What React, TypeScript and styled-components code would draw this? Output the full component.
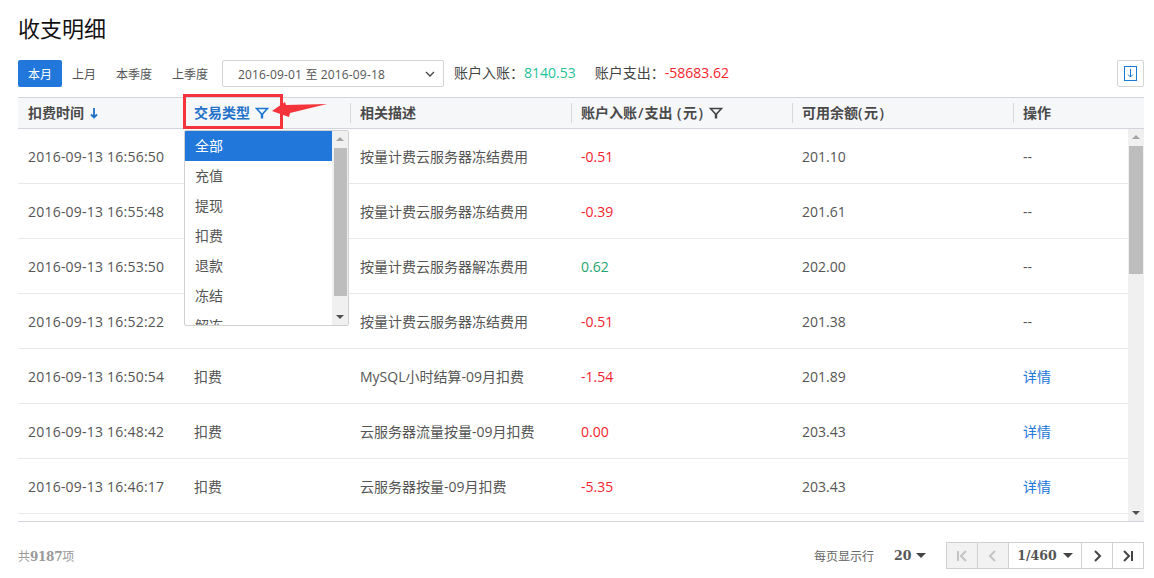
import React from 'react';
import styled, { createGlobalStyle } from 'styled-components';

const Global = createGlobalStyle`
  html, body { margin: 0; padding: 0; background: #fff; }
  body { font-family: "Open Sans", "Noto Sans CJK SC", sans-serif; font-size: 14px; color: #555; }
  * { box-sizing: border-box; }
`;

const Page = styled.div`
  position: relative;
  width: 1154px;
  height: 578px;
  overflow: hidden;
  padding: 13px 10px 0 18px;
`;
const Title = styled.h1`
  margin: 0;
  height: 30px;
  font-size: 22px;
  line-height: 30px;
  font-weight: 400;
  color: #111;
`;
const Toolbar = styled.div`
  display: flex;
  align-items: center;
  height: 27px;
  margin-top: 17px;
`;
const Period = styled.button<{ $active?: boolean; $w?: number }>`
  width: ${p => p.$w || 44}px;
  height: 27px;
  padding: 0;
  border: 0;
  border-radius: 2px;
  font: inherit;
  font-size: 12px;
  background: ${p => (p.$active ? '#2277da' : 'transparent')};
  color: ${p => (p.$active ? '#fff' : '#555')};
`;
const DateSelect = styled.div`
  display: flex;
  align-items: center;
  justify-content: space-between;
  width: 222px;
  height: 27px;
  margin-left: 4px;
  padding: 0 8px 0 15px;
  border: 1px solid #d5d5d5;
  border-radius: 2px;
  font-size: 12px;
  letter-spacing: 0.15px;
  color: #555;
`;
const Stat = styled.span<{ $ml: number }>`
  margin-left: ${p => p.$ml}px;
  margin-bottom: 3px;
  font-size: 14px;
  color: #444;
`;
const Amount = styled.span<{ $c: string }>`
  color: ${p => p.$c};
`;
const Spacer = styled.div`
  flex: 1;
`;
const Export = styled.button`
  display: flex;
  align-items: center;
  justify-content: center;
  width: 27px;
  height: 27px;
  padding: 0;
  border: 1px solid #d5d5d5;
  border-radius: 2px;
  background: #fff;
`;
const Head = styled.div`
  display: grid;
  grid-template-columns: 166px 166px 221px 221px 221px 1fr;
  align-items: center;
  height: 32px;
  margin-top: 10px;
  background: #f6f7f9;
  border-top: 1px solid #d3d4de;
  border-bottom: 1px solid #d3d4de;
`;
const HeadCell = styled.div<{ $active?: boolean; $first?: boolean }>`
  display: flex;
  align-items: center;
  gap: 5px;
  height: 20px;
  padding-left: ${p => (p.$first ? 10 : 9)}px;
  border-left: ${p => (p.$first ? '0' : '1px solid #d8d8dc')};
  font-size: 14px;
  line-height: 18px;
  font-weight: 600;
  white-space: pre;
  color: ${p => (p.$active ? '#2272c9' : '#4a4a4a')};
`;
const HeadLabel = styled.span`
  word-spacing: 1px;
`;
const Unit = styled.span`
  letter-spacing: 1.5px;
`;
const Slash = styled.span`
  margin: 0 1px;
`;
const Body = styled.div`
  display: flex;
  height: 393px;
  overflow: hidden;
  border-bottom: 1px solid #d3d4de;
`;
const Rows = styled.div`
  flex: 1;
  min-width: 0;
`;
const Row = styled.div`
  display: grid;
  grid-template-columns: 166px 166px 221px 221px 221px 1fr;
  align-items: center;
  height: 55px;
  border-bottom: 1px solid #e8e8ea;
`;
const Cell = styled.div<{ $c?: string }>`
  padding: 0 0 0 10px;
  font-size: 14px;
  color: ${p => p.$c || '#555'};
  white-space: nowrap;
`;
const TimeCell = styled(Cell)`
  letter-spacing: 0.22px;
`;
const Scrollbar = styled.div`
  display: flex;
  flex-direction: column;
  align-items: center;
  width: 16px;
  background: #f0f0f0;
`;
const ArrowBtn = styled.div<{ $down?: boolean }>`
  width: 0;
  height: 0;
  margin: ${p => (p.$down ? 'auto 0 6px' : '6px 0 0')};
  border-left: 4px solid transparent;
  border-right: 4px solid transparent;
  border-${p => (p.$down ? 'top' : 'bottom')}: 4px solid ${p => (p.$down ? '#505050' : '#a3a3a3')};
`;
const Thumb = styled.div`
  width: 14px;
  height: 128px;
  margin-top: 7px;
  background: #bdbdbd;
`;
const Footer = styled.div`
  display: flex;
  align-items: center;
  height: 27px;
  margin-top: 20px;
`;
const Total = styled.span`
  font-size: 12px;
  color: #999;
`;
const SerifBold = styled.b`
  font-family: "DejaVu Serif", "Noto Sans CJK SC", serif;
  font-size: 12.5px;
  font-weight: 700;
`;
const TotalCount = styled(SerifBold)`
  font-size: 12px;
  letter-spacing: -0.3px;
`;
const PageSizeLabel = styled.span`
  font-size: 12px;
  color: #666;
`;
const PageSize = styled.div`
  display: flex;
  align-items: center;
  gap: 5px;
  width: 72px;
  padding-left: 20px;
  color: #555;
`;
const Caret = styled.i`
  display: block;
  width: 0;
  height: 0;
  border-left: 5px solid transparent;
  border-right: 5px solid transparent;
  border-top: 5px solid #444;
`;
const Pager = styled.div`
  display: flex;
  height: 27px;
  border: 1px solid #d0d0d0;
`;
const PagerBtn = styled.div<{ $off?: boolean; $w?: number }>`
  display: flex;
  align-items: center;
  justify-content: center;
  gap: 6px;
  width: ${p => p.$w || 31}px;
  border-left: 1px solid #d0d0d0;
  background: ${p => (p.$off ? '#f2f2f2' : '#fff')};
  color: #555;
  &:first-child { border-left: 0; width: 30px; }
`;
const RedBox = styled.div`
  position: absolute;
  left: 183px;
  top: 94px;
  width: 100px;
  height: 35px;
  border: 3px solid #f5333a;
`;
const Callout = styled.svg`
  position: absolute;
  left: 270px;
  top: 98px;
`;
const Dropdown = styled.div`
  position: absolute;
  left: 184px;
  top: 130px;
  display: flex;
  width: 165px;
  height: 196px;
  overflow: hidden;
  background: #fff;
  border: 1px solid #d0d0d0;
  border-radius: 2px;
`;
const Options = styled.div`
  flex: 1;
  min-width: 0;
`;
const Option = styled.div<{ $sel?: boolean }>`
  height: 30px;
  padding-left: 10px;
  font-size: 14px;
  line-height: 30px;
  background: ${p => (p.$sel ? '#2277da' : 'transparent')};
  color: ${p => (p.$sel ? '#fff' : '#555')};
`;
const DropThumb = styled(Thumb)`
  width: 13px;
  height: 148px;
  margin-top: 7px;
`;

const rows = [
  ['2016-09-13 16:56:50', '', '按量计费云服务器冻结费用', '-0.51', '#f5222d', '201.10', '--'],
  ['2016-09-13 16:55:48', '', '按量计费云服务器冻结费用', '-0.39', '#f5222d', '201.61', '--'],
  ['2016-09-13 16:53:50', '', '按量计费云服务器解冻费用', '0.62', '#25a56f', '202.00', '--'],
  ['2016-09-13 16:52:22', '', '按量计费云服务器冻结费用', '-0.51', '#f5222d', '201.38', '--'],
  ['2016-09-13 16:50:54', '扣费', 'MySQL小时结算-09月扣费', '-1.54', '#f5222d', '201.89', '详情'],
  ['2016-09-13 16:48:42', '扣费', '云服务器流量按量-09月扣费', '0.00', '#f5222d', '203.43', '详情'],
  ['2016-09-13 16:46:17', '扣费', '云服务器按量-09月扣费', '-5.35', '#f5222d', '203.43', '详情'],
];

const Filter = ({ c }: { c: string }) => (
  <svg width="14" height="14" viewBox="0 0 14 14" fill="none" stroke={c}>
    <path d="M1.5 2.5h11L7 8.5z" strokeWidth="1.6" />
    <path d="M7 8v4.5" strokeWidth="2.4" />
  </svg>
);
const Chevron = ({ d, c = '#444' }: { d: string; c?: string }) => (
  <svg width="14" height="14" viewBox="0 0 14 14" fill="none" stroke={c} strokeWidth="2">
    <path d={d} />
  </svg>
);

export default function App() {
  return (
    <Page>
      <Global />
      <Title>收支明细</Title>
      <Toolbar>
        <Period $active>本月</Period>
        <Period>上月</Period>
        <Period $w={56}>本季度</Period>
        <Period $w={56}>上季度</Period>
        <DateSelect>
          <span>2016-09-01 至 2016-09-18</span>
          <svg width="10" height="6" viewBox="0 0 10 6" fill="none" stroke="#444" strokeWidth="1.3">
            <path d="M1 1l4 4 4-4" />
          </svg>
        </DateSelect>
        <Stat $ml={10}>账户入账：<Amount $c="#1fc29a">8140.53</Amount></Stat>
        <Stat $ml={19}>账户支出：<Amount $c="#f5222d">-58683.62</Amount></Stat>
        <Spacer />
        <Export aria-label="导出">
          <svg width="14" height="15" viewBox="0 0 14 15" fill="none" stroke="#1a7ad4">
            <rect x="0.5" y="0.5" width="12" height="14" />
            <path d="M6.5 3v8M4 8.5l2.5 2.5L9 8.5" />
          </svg>
        </Export>
      </Toolbar>
      <Head>
        <HeadCell $first>
          扣费时间
          <svg width="10" height="12" viewBox="0 0 10 12" fill="none" stroke="#1f6fc4" strokeWidth="1.8">
            <path d="M5 1v9.5M2 7.5l3 3 3-3" />
          </svg>
        </HeadCell>
        <HeadCell $active>
          交易类型
          <Filter c="#1a78d2" />
        </HeadCell>
        <HeadCell>相关描述</HeadCell>
        <HeadCell>
          <HeadLabel>账户入账<Slash>/</Slash>支出 <Unit>(元)</Unit></HeadLabel>
          <Filter c="#444" />
        </HeadCell>
        <HeadCell><span>可用余额<Unit>(元)</Unit></span></HeadCell>
        <HeadCell>操作</HeadCell>
      </Head>
      <Body>
        <Rows>
          {rows.map(r => (
            <Row key={r[0]}>
              <TimeCell>{r[0]}</TimeCell>
              <Cell>{r[1]}</Cell>
              <Cell>{r[2]}</Cell>
              <Cell $c={r[4]}>{r[3]}</Cell>
              <Cell>{r[5]}</Cell>
              <Cell $c={r[6] === '详情' ? '#2277da' : '#555'}>{r[6]}</Cell>
            </Row>
          ))}
          <Row />
        </Rows>
        <Scrollbar>
          <ArrowBtn />
          <Thumb />
          <ArrowBtn $down />
        </Scrollbar>
      </Body>
      <Footer>
        <Total>共<TotalCount>9187</TotalCount>项</Total>
        <Spacer />
        <PageSizeLabel>每页显示行</PageSizeLabel>
        <PageSize>
          <SerifBold>20</SerifBold>
          <Caret />
        </PageSize>
        <Pager>
          <PagerBtn $off><Chevron c="#c4c4c4" d="M3 2v10M11 2L6 7l5 5" /></PagerBtn>
          <PagerBtn $off><Chevron c="#c4c4c4" d="M9 2L4 7l5 5" /></PagerBtn>
          <PagerBtn $w={73}><SerifBold>1/460</SerifBold><Caret /></PagerBtn>
          <PagerBtn><Chevron d="M5 2l5 5-5 5" /></PagerBtn>
          <PagerBtn><Chevron d="M11 2v10M3 2l5 5-5 5" /></PagerBtn>
        </Pager>
      </Footer>
      <RedBox />
      <Callout width="60" height="22" viewBox="0 0 60 22">
        <path d="M2 13L15 4l1 3L57 6 20 15l-1 4z" fill="#f5333a" />
      </Callout>
      <Dropdown>
        <Options>
          <Option $sel>全部</Option>
          <Option>充值</Option>
          <Option>提现</Option>
          <Option>扣费</Option>
          <Option>退款</Option>
          <Option>冻结</Option>
          <Option>解冻</Option>
        </Options>
        <Scrollbar>
          <ArrowBtn />
          <DropThumb />
          <ArrowBtn $down />
        </Scrollbar>
      </Dropdown>
    </Page>
  );
}
